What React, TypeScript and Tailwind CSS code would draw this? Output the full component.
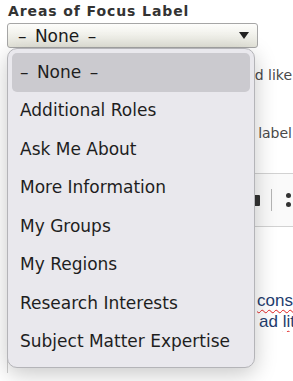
import React from "react";

const items = [
  "– None –",
  "Additional Roles",
  "Ask Me About",
  "More Information",
  "My Groups",
  "My Regions",
  "Research Interests",
  "Subject Matter Expertise",
];

export default function App() {
  return (
    <div className="relative w-[293px] h-[381px] overflow-hidden bg-white font-['DejaVu_Sans',sans-serif] text-[#222]">
      {/* page content (behind the open menu) */}
      <div className="pl-[7px] pt-[3px]">
        <div className="text-[14px] leading-[17px] font-bold tracking-[0.9px] text-[#333] pl-[1px]">
          Areas of Focus Label
        </div>
        <div className="mt-[3px] w-[251px] h-[25px] flex items-center justify-between rounded-[3px] border border-[#a6a6a6] bg-gradient-to-b from-[#fdfdfb] to-[#e4e4da] pl-[10px] pr-[8px]">
          <span className="text-[17px] leading-[20px] text-[#1a1a1a] [word-spacing:3px]">– None –</span>
          <svg width="10" height="7" viewBox="0 0 10 7">
            <path d="M0 0 H10 L5 7 Z" fill="#222" />
          </svg>
        </div>
        <div className="mt-[17px] h-[20px] overflow-hidden whitespace-nowrap text-[14px] leading-[20px] text-[#4a4a4a] flex justify-end pr-[1px]">
          Choose which heading you would like
        </div>
        <div className="mt-[38px] h-[20px] overflow-hidden whitespace-nowrap text-[14px] leading-[20px] text-[#4a4a4a] flex justify-end pr-[1px]">
          This is displayed as the label
        </div>
        <div className="mt-[30px] border-l border-[#cfcfcf] h-[200px]">
          <div className="h-[54px] border-y border-[#d2d2d2] bg-[#fafafa] flex items-center justify-end pr-[2px]">
            <div className="flex items-center">
              <div className="w-[6px] h-[11px] bg-[#333] rounded-[1px]" />
              <div className="ml-[11px] w-[1px] h-[22px] bg-[#b5b5b5]" />
              <div className="ml-[14px] flex flex-col gap-[4px]">
                <div className="w-[5px] h-[5px] rounded-full bg-[#333]" />
                <div className="w-[5px] h-[5px] rounded-full bg-[#333]" />
              </div>
            </div>
          </div>
          <div className="mt-[63px] font-['Liberation_Sans',sans-serif] text-[17px] leading-[21px] text-[#1f3d6e] flex flex-col items-end whitespace-nowrap overflow-hidden">
            <div>
              <span>reference to the </span>
              <span className="underline decoration-wavy decoration-[#e02020] decoration-[1px] underline-offset-[3px]">cons</span>
            </div>
            <div className="-mr-[2px]">
              <span>the </span>
              <span>ad </span>
              <span className="underline decoration-wavy decoration-[#e02020] decoration-[1px] underline-offset-[3px]">lit</span>
            </div>
          </div>
        </div>
      </div>

      {/* open dropdown menu */}
      <div className="absolute left-[7px] top-[48px] w-[248px] h-[320px] rounded-[10px] border border-[#b4b4b8] bg-[#e9e8ed] shadow-[0_6px_22px_rgba(0,0,0,0.22)] px-[4px] pt-[4px]">
        {items.map((it, i) => (
          <div
            key={it}
            className={
              i === 0
                ? "h-[38.5px] flex items-center pl-[8px] rounded-[5px] bg-[#cbcacf] text-[17px] text-[#1e1e1e] [word-spacing:3px]"
                : "h-[38.5px] flex items-center pl-[8px] text-[17px] text-[#1e1e1e]"
            }
          >
            {it}
          </div>
        ))}
      </div>
    </div>
  );
}
